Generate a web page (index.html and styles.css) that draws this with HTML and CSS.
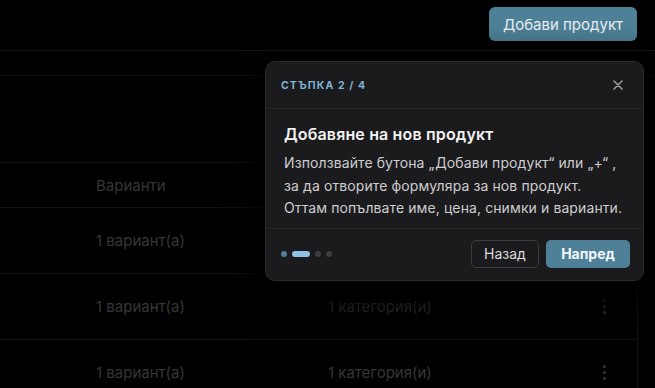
FILE: index.html
```html
<!DOCTYPE html>
<html lang="bg">
<head>
    <meta charset="UTF-8">
    <meta name="viewport" content="width=device-width, initial-scale=1.0">
    <title>Продукти</title>
    <link rel="stylesheet" href="styles.css">
</head>
<body>

    <div id="topbar">
        <button class="btn-add">Добави продукт</button>
    </div>

    <div id="toolbar"></div>

    <div id="card">
        <div class="row head">
            <div></div>
            <div class="cell">Варианти</div>
            <div></div>
            <div></div>
        </div>
        <div class="row">
            <div></div>
            <div class="cell">1 вариант(а)</div>
            <div class="cell">1 категория(и)</div>
            <div class="kebab"><span></span><span></span><span></span></div>
        </div>
        <div class="row">
            <div></div>
            <div class="cell">1 вариант(а)</div>
            <div class="cell">1 категория(и)</div>
            <div class="kebab"><span></span><span></span><span></span></div>
        </div>
        <div class="row">
            <div></div>
            <div class="cell">1 вариант(а)</div>
            <div class="cell">1 категория(и)</div>
            <div class="kebab"><span></span><span></span><span></span></div>
        </div>
    </div>

    <!-- tour popover -->
    <div id="tour">
        <div class="tour-head">
            <span class="tour-step">СТЪПКА 2 / 4</span>
            <span class="tour-close">
                <svg width="10" height="10" viewBox="0 0 10 10">
                    <path d="M1 1L9 9M9 1L1 9" stroke="#9c9ca1" stroke-width="1.6" stroke-linecap="round"/>
                </svg>
            </span>
        </div>
        <div class="tour-body">
            <div class="tour-title">Добавяне на нов продукт</div>
            <p class="tour-text">Използвайте бутона „Добави продукт“ или „+“ , за да отворите формуляра за нов продукт. Оттам попълвате име, цена, снимки и варианти.</p>
        </div>
        <div class="tour-foot">
            <div class="dots">
                <span class="dot done"></span>
                <span class="dot current"></span>
                <span class="dot"></span>
                <span class="dot"></span>
            </div>
            <div class="actions">
                <button class="btn-back">Назад</button>
                <button class="btn-next">Напред</button>
            </div>
        </div>
    </div>

</body>
</html>
```

FILE: styles.css
```css
body {
    margin: 0;
    padding: 0;
    background: #000;
    font-family: Inter, "Noto Sans", sans-serif;
    overflow: hidden;
}

button {
    font-family: inherit;
    cursor: pointer;
}

#topbar {
    height: 51px;
    border-bottom: 1px solid #161617;
    display: flex;
    justify-content: flex-end;
    align-items: flex-start;
    padding: 7px 18px 0 0;
    box-sizing: border-box;
}

.btn-add {
    height: 34px;
    padding: 0 14px;
    border: none;
    border-radius: 6px;
    background: #4e8097;
    color: #e9eff3;
    font-size: 15px;
}

#toolbar {
    height: 24px;
    border-bottom: 1px solid #111112;
}

#card {
    width: 637px;
    margin-top: 86px;
    border-right: 1px solid #141415;
    border-top: 1px solid #121213;
}

.row {
    display: grid;
    grid-template-columns: 96px 232px 256px 40px;
    align-items: center;
    height: 65px;
    border-bottom: 1px solid #121213;
    color: #363638;
    font-size: 15px;
}

.row.head {
    height: 44px;
}

.kebab {
    display: flex;
    flex-direction: column;
    align-items: center;
    gap: 3px;
}

.kebab span {
    width: 3px;
    height: 3px;
    border-radius: 50%;
    background: #3a3a3c;
}

#tour {
    position: absolute;
    left: 265px;
    top: 61px;
    width: 379px;
    box-sizing: border-box;
    background: #1b1b1d;
    border: 1px solid #2b2b2e;
    border-radius: 10px;
    box-shadow: 0 12px 34px 12px #000;
}

.tour-head {
    height: 46px;
    padding: 0 16px 0 15px;
    display: flex;
    align-items: center;
    justify-content: space-between;
    border-bottom: 1px solid #252528;
}

.tour-step {
    font-size: 10.5px;
    font-weight: 700;
    letter-spacing: 1.1px;
    color: #7fb3d5;
}

.tour-close {
    display: flex;
    margin-right: 4px;
}

.tour-body {
    padding: 15px 16px 8px 18px;
    border-bottom: 1px solid #252528;
}

.tour-title {
    font-size: 16px;
    font-weight: 600;
    line-height: 20px;
    letter-spacing: 0.15px;
    color: #f2f2f3;
}

.tour-text {
    margin: 8px 0 0;
    font-size: 14px;
    line-height: 22.5px;
    letter-spacing: 0.1px;
    color: #cdcdd0;
}

.tour-foot {
    padding: 11px 13px 12px 15px;
    display: flex;
    align-items: center;
    justify-content: space-between;
}

.dots {
    display: flex;
    gap: 5px;
}

.dot {
    width: 6px;
    height: 6px;
    border-radius: 3px;
    background: #3d3d42;
}

.dot.done {
    background: #4f7f97;
}

.dot.current {
    width: 18px;
    background: #8fc3e6;
}

.actions {
    display: flex;
    gap: 7px;
}

.btn-back {
    height: 28px;
    width: 68px;
    border: 1px solid #3d3d41;
    border-radius: 5px;
    background: transparent;
    color: #dcdcdf;
    font-size: 14px;
}

.btn-next {
    height: 28px;
    width: 84px;
    border: none;
    border-radius: 5px;
    background: #4e8097;
    color: #f4f7f9;
    font-size: 14px;
    font-weight: 700;
}
```
